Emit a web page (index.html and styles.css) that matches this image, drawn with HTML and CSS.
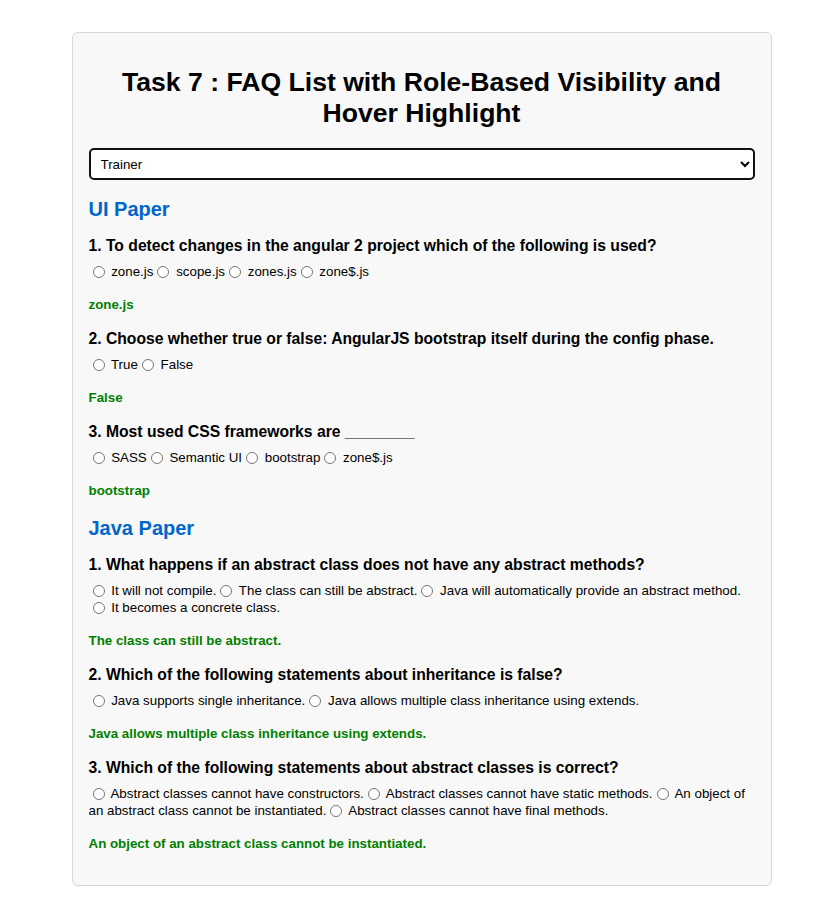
FILE: index.html
```html
<!DOCTYPE html>
<html lang="en">
<head>
<meta charset="utf-8">
<title>FAQ List</title>
<link rel="stylesheet" href="styles.css">
</head>
<body>
<div class="page">
  <div class="container">
    <h1 class="title">Task 7 : FAQ List with Role-Based Visibility and Hover Highlight</h1>
    <select class="role">
      <option>Trainer</option>
      <option>Student</option>
    </select>

    <h2 class="paper">UI Paper</h2>
    <div class="faq">
      <h3 class="question">1. To detect changes in the angular 2 project which of the following is used?</h3>
      <div class="options"><label class="opt"><input type="radio" name="u1"> zone.js</label><label class="opt"><input type="radio" name="u1"> scope.js</label><label class="opt"><input type="radio" name="u1"> zones.js</label><label class="opt"><input type="radio" name="u1"> zone$.js</label></div>
      <p class="answer">zone.js</p>
    </div>
    <div class="faq">
      <h3 class="question">2. Choose whether true or false: AngularJS bootstrap itself during the config phase.</h3>
      <div class="options"><label class="opt"><input type="radio" name="u2"> True</label><label class="opt"><input type="radio" name="u2"> False</label></div>
      <p class="answer">False</p>
    </div>
    <div class="faq">
      <h3 class="question">3. Most used CSS frameworks are ________</h3>
      <div class="options"><label class="opt"><input type="radio" name="u3"> SASS</label><label class="opt"><input type="radio" name="u3"> Semantic UI</label><label class="opt"><input type="radio" name="u3"> bootstrap</label><label class="opt"><input type="radio" name="u3"> zone$.js</label></div>
      <p class="answer">bootstrap</p>
    </div>

    <h2 class="paper">Java Paper</h2>
    <div class="faq">
      <h3 class="question">1. What happens if an abstract class does not have any abstract methods?</h3>
      <div class="options"><label class="opt"><input type="radio" name="j1"> It will not compile.</label><label class="opt"><input type="radio" name="j1"> The class can still be abstract.</label><label class="opt"><input type="radio" name="j1"> Java will automatically provide an abstract method.</label><label class="opt"><input type="radio" name="j1"> It becomes a concrete class.</label></div>
      <p class="answer">The class can still be abstract.</p>
    </div>
    <div class="faq">
      <h3 class="question">2. Which of the following statements about inheritance is false?</h3>
      <div class="options"><label class="opt"><input type="radio" name="j2"> Java supports single inheritance.</label><label class="opt"><input type="radio" name="j2"> Java allows multiple class inheritance using extends.</label></div>
      <p class="answer">Java allows multiple class inheritance using extends.</p>
    </div>
    <div class="faq">
      <h3 class="question">3. Which of the following statements about abstract classes is correct?</h3>
      <div class="options"><label class="opt"><input type="radio" name="j3"> Abstract classes cannot have constructors.</label><label class="opt"><input type="radio" name="j3"> Abstract classes cannot have static methods.</label><label class="opt"><input type="radio" name="j3"> An object of an abstract class cannot be instantiated.</label><label class="opt"><input type="radio" name="j3"> Abstract classes cannot have final methods.</label></div>
      <p class="answer">An object of an abstract class cannot be instantiated.</p>
    </div>
  </div>
</div>
</body>
</html>
```
FILE: styles.css
```css
html, body {
  margin: 0;
  padding: 0;
  background: #ffffff;
  font-family: "Liberation Sans", Arial, sans-serif;
  color: #000;
}

.page {
  padding: 32px 0 14px 5px;
  display: flex;
  justify-content: center;
}

.container {
  width: 700px;
  box-sizing: border-box;
  background: #f8f8f8;
  border: 1px solid #d6d6d6;
  border-radius: 6px;
  padding: 16px;
}

.title {
  font-size: 26.6px;
  line-height: 31px;
  font-weight: bold;
  text-align: center;
  margin: 18px 0 19px;
}

.role {
  display: block;
  width: 100%;
  height: 32px;
  box-sizing: border-box;
  border: 2px solid #111;
  border-radius: 5px;
  background: #fff;
  font-family: "Liberation Sans", Arial, sans-serif;
  font-size: 13.33px;
  color: #000;
  padding: 0 6px;
  margin: 0;
}

.paper {
  font-size: 20px;
  line-height: 24px;
  font-weight: bold;
  color: #0066cc;
  margin: 17px 0 16px;
}

.faq {
  margin: 0;
}

.question {
  font-size: 15.7px;
  line-height: 18px;
  font-weight: bold;
  margin: 0 0 8px;
}

.options {
  font-size: 13.33px;
  line-height: 17px;
  margin: 0 0 17px;
}

.opt input {
  margin: 0 3px 0 4px;
  width: 12px;
  height: 12px;
  vertical-align: -2px;
}

.answer {
  font-size: 13.33px;
  line-height: 16px;
  font-weight: bold;
  color: #008000;
  margin: 0 0 17px;
}
```
